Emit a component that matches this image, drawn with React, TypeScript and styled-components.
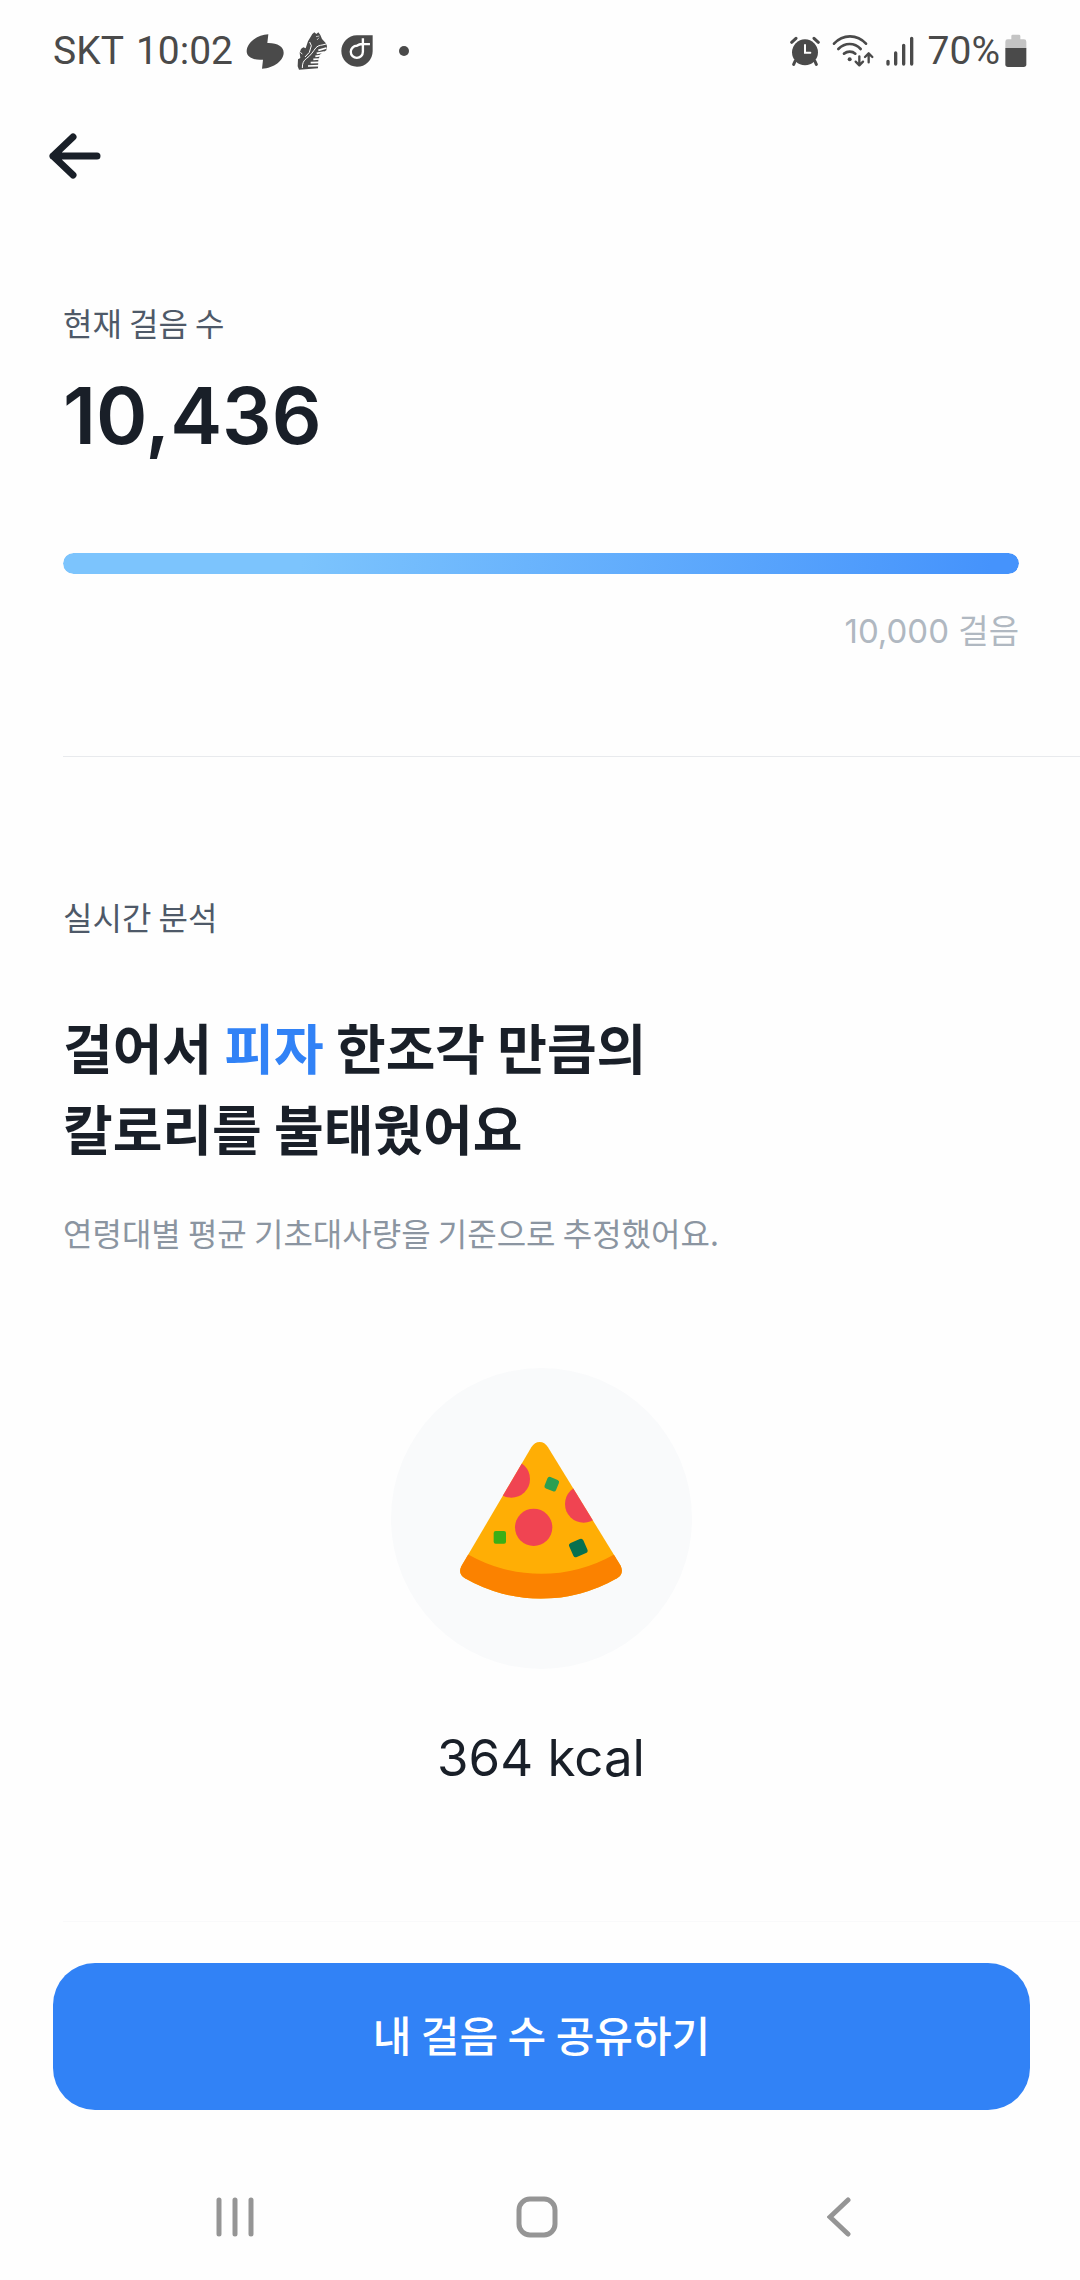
import React from "react";
import styled, { createGlobalStyle } from "styled-components";

const korean = `"Noto Sans CJK KR", sans-serif`;
const latin = `Inter, "Noto Sans CJK KR", sans-serif`;

const GlobalStyle = createGlobalStyle`
  * { box-sizing: border-box; }
  body {
    margin: 0;
    background: #fefefe;
    color: #191f28;
    font-family: ${korean};
  }
  h1, h2, p { margin: 0; }
  svg { display: block; flex: none; }
`;

const Screen = styled.div`
  display: flex;
  flex-direction: column;
  min-height: 100vh;
`;

const StatusBar = styled.header`
  display: flex;
  justify-content: space-between;
  align-items: center;
  height: 102px;
  padding: 0 53px;
  color: #4a4a4a;
  font: 400 39px/48px Roboto, sans-serif;
`;

const StatusGroup = styled.div<{ $gap: number }>`
  display: flex;
  align-items: center;
  gap: ${({ $gap }) => $gap}px;
`;

const AppBar = styled.nav`
  display: flex;
  align-items: center;
  height: 108px;
  padding: 0 44px;
`;

const IconButton = styled.button`
  display: flex;
  justify-content: center;
  align-items: center;
  min-height: 64px;
  padding: 0 5px;
  border: 0;
  background: none;
  color: inherit;
  cursor: pointer;
`;

const Main = styled.main`
  flex: 1;
`;

const Section = styled.section<{ $top: number; $bottom: number }>`
  display: flex;
  flex-direction: column;
  padding: ${({ $top, $bottom }) => `${$top}px 61px ${$bottom}px 63px`};
`;

const Label = styled.h2`
  color: #4e5968;
  font-size: 32px;
  font-weight: 400;
  line-height: 48px;
`;

const StepCount = styled.p`
  margin-top: 22px;
  font: 600 78px/96px ${latin};
`;

const Track = styled.div`
  height: 21px;
  margin-top: 89px;
  border-radius: 11px;
  background: #f2f4f6;
  overflow: hidden;
`;

const Fill = styled.div`
  height: 100%;
  border-radius: 11px;
  background: linear-gradient(100deg, #7cc4fd 25%, #4593fc 97%);
`;

const Goal = styled.p`
  margin-top: 33px;
  color: #b0b8c1;
  text-align: right;
  font: 400 33px/48px ${latin};
`;

const Divider = styled.hr<{ $color: string }>`
  width: auto;
  height: 1px;
  margin: 0 0 0 63px;
  border: 0;
  background: ${({ $color }) => $color};
`;

const Headline = styled.h1`
  margin-top: 66px;
  font-size: 54px;
  font-weight: 700;
  line-height: 81px;
`;

const Accent = styled.span`
  color: #3182f6;
`;

const Caption = styled.p`
  margin-top: 40px;
  color: #8b95a1;
  font-size: 32px;
  line-height: 48px;
`;

const FoodBadge = styled.div`
  display: flex;
  justify-content: center;
  align-items: center;
  align-self: center;
  width: 301px;
  height: 301px;
  margin-top: 112px;
  padding-top: 4px;
  border-radius: 50%;
  background: #f9fafb;
`;

const Calories = styled.p`
  margin-top: 57px;
  text-align: center;
  font: 400 51px/64px ${latin};
`;

const ActionBar = styled.div`
  padding: 41px 50px 43px 53px;
`;

const ShareButton = styled.button`
  width: 100%;
  padding: 39px 24px 45px;
  border: 0;
  border-radius: 42px;
  background: #3182f6;
  color: #ffffff;
  font: 500 42px/63px ${korean};
  cursor: pointer;
`;

const SystemNav = styled.nav`
  display: grid;
  grid-template-columns: repeat(3, 1fr);
  align-items: center;
  height: 127px;
  padding: 0 90px 0 84px;
  color: #959595;
`;

const BlobIcon = () => (
  <svg width="38" height="35" viewBox="46 41 114 105" fill="currentColor" aria-hidden="true">
    <path d="M113 42C78 44 48 68 48 93C48 110 68 121 97 118L94 145C130 143 159 120 159 97C159 79 140 67 110 68Z" />
  </svg>
);

const ShoeIcon = () => (
  <svg width="31" height="38" viewBox="198 37 93 114" aria-hidden="true">
    <path fill="currentColor" d="M244 43L250 38L256 43L262 38L268 46L273 58L284 70L288 79L286 92L268 103L262 122L261 146L204 150L200 140L201 119L208 115L206 99L210 88L217 83L224 86L231 65Z" />
    <g fill="none" stroke="#fefefe" strokeWidth="3">
      <path d="M214 145C214 131 217 123 227 116C240 107 247 94 255 84C263 75 272 78 285 73" />
      <path d="M236 67L241 78L235 98L222 112M208 98L214 103" />
      <path strokeWidth="2" d="M255 51L265 49M258 61L264 54" />
    </g>
    <g fill="none" stroke="#fefefe" strokeWidth="5">
      <path d="M262 92L286 85M257 101L280 97M253 110L268 108M247 119L266 118M239 129L264 128M231 139L264 138" />
    </g>
  </svg>
);

const DropIcon = () => (
  <svg width="32" height="32" viewBox="338 46 95 95" aria-hidden="true">
    <path fill="currentColor" d="M385 47H432V94A46.500 46.500 0 1 1 385 47Z" />
    <path fill="none" stroke="#fefefe" strokeWidth="7" d="M403 56V96A18 18 0 1 1 385 78Q394 72 402 73H424" />
  </svg>
);

const DotIcon = () => (
  <svg width="34" height="10" viewBox="0 0 34 10" fill="currentColor" aria-hidden="true">
    <circle cx="18" cy="5" r="5" />
  </svg>
);

const AlarmIcon = () => (
  <svg width="30" height="30" viewBox="89 106 90 90" fill="none" strokeLinecap="round" aria-hidden="true">
    <circle cx="134" cy="155" r="39" fill="currentColor" />
    <path stroke="currentColor" strokeWidth="9" d="M94 125L107 113M161 113L174 125M104 182L100 191M164 182L168 191" />
    <path stroke="#fefefe" strokeWidth="6" d="M134 133V156H150" />
  </svg>
);

const WifiIcon = () => (
  <svg width="42" height="34" viewBox="219 101 126 102" fill="none" stroke="currentColor" strokeWidth="8" strokeLinecap="round" strokeLinejoin="round" aria-hidden="true">
    <path d="M225 130Q245 108 273 108Q301 108 321 130M238 146Q253 131 272 131Q291 131 305 146M255 160Q263 154 272 154Q282 154 289 160" />
    <circle cx="272" cy="177" r="6" fill="currentColor" stroke="none" />
    <path strokeWidth="7" d="M301 168V194M290 184L301 195L312 184M329 186V160M318 170L329 159L340 170" />
  </svg>
);

const SignalIcon = () => (
  <svg width="28" height="30" viewBox="373 106 84 90" stroke="currentColor" strokeWidth="10" strokeLinecap="round" aria-hidden="true">
    <path d="M379 182V190M402 157V190M426 134V190M450 113V190" />
  </svg>
);

const BatteryIcon = () => (
  <svg width="22" height="34" viewBox="734 101 66 102" aria-hidden="true">
    <path fill="#c4c4c4" d="M735 144V124Q735 117 742 117H753V107Q753 103 757 103H776Q780 103 780 107V117H791Q798 117 798 124V144Z" />
    <path fill="currentColor" d="M735 143H798V192Q798 200 790 200H743Q735 200 735 192Z" />
  </svg>
);

const ArrowLeftIcon = () => (
  <svg width="52" height="46" viewBox="0 0 52 46" fill="none" stroke="currentColor" strokeWidth="7" strokeLinecap="round" strokeLinejoin="round" aria-hidden="true">
    <path d="M24 4L4 23L24 42M4 23H48" />
  </svg>
);

const PizzaIcon = () => (
  <svg width="162" height="157" viewBox="270 276 486 471" role="img" aria-label="피자">
    <defs>
      <clipPath id="slice">
        <path d="M484 292Q494 276 509 276Q524 276 534 292L752 647Q763 672 741 685A457 457 0 0 1 285 685Q263 672 274 649Z" />
      </clipPath>
    </defs>
    <g clipPath="url(#slice)">
      <rect x="260" y="270" width="506" height="486" fill="#ffae05" />
      <path fill="#fb8200" d="M250 588L296 614A441 441 0 0 0 731 614L780 588V760H250Z" />
      <g fill="#f04452">
        <circle cx="424" cy="387" r="56" />
        <circle cx="491" cy="532" r="56" />
        <circle cx="641" cy="462" r="56" />
      </g>
    </g>
    <rect x="527" y="384" width="37" height="37" rx="7" fill="#2c9f52" transform="rotate(22 545 402)" />
    <rect x="371" y="543" width="37" height="38" rx="6" fill="#3aaf16" />
    <rect x="602" y="571" width="46" height="46" rx="8" fill="#08704f" transform="rotate(-24 625 594)" />
  </svg>
);

const RecentsIcon = () => (
  <svg width="38" height="40" viewBox="0 0 38 40" stroke="currentColor" strokeWidth="5" strokeLinecap="round" aria-hidden="true">
    <path d="M3 3V37M19 3V37M35 3V37" />
  </svg>
);

const HomeIcon = () => (
  <svg width="42" height="42" viewBox="0 0 42 42" fill="none" stroke="currentColor" strokeWidth="5" aria-hidden="true">
    <rect x="3" y="3" width="36" height="36" rx="11" />
  </svg>
);

const BackIcon = () => (
  <svg width="24" height="40" viewBox="0 0 24 40" fill="none" stroke="currentColor" strokeWidth="5" strokeLinecap="round" aria-hidden="true">
    <path d="M21 3L3 20L21 37" />
  </svg>
);

const steps = 10436;
const goal = 10000;

export default function App() {
  const progress = Math.min(100, (steps / goal) * 100);

  return (
    <Screen>
      <GlobalStyle />
      <StatusBar>
        <StatusGroup $gap={13}>
          <StatusGroup $gap={12}>
            <span>SKT</span>
            <span>10:02</span>
          </StatusGroup>
          <BlobIcon />
          <ShoeIcon />
          <DropIcon />
          <DotIcon />
        </StatusGroup>
        <StatusGroup $gap={12}>
          <AlarmIcon />
          <WifiIcon />
          <StatusGroup $gap={14}>
            <SignalIcon />
            <StatusGroup $gap={5}>
              <span>70%</span>
              <BatteryIcon />
            </StatusGroup>
          </StatusGroup>
        </StatusGroup>
      </StatusBar>

      <AppBar>
        <IconButton type="button" aria-label="뒤로">
          <ArrowLeftIcon />
        </IconButton>
      </AppBar>

      <Main>
        <Section $top={88} $bottom={101}>
          <Label>현재 걸음 수</Label>
          <StepCount>{steps.toLocaleString("en-US")}</StepCount>
          <Track role="progressbar" aria-label="걸음 수" aria-valuemin={0} aria-valuemax={goal} aria-valuenow={Math.min(steps, goal)}>
            <Fill style={{ width: `${progress}%` }} />
          </Track>
          <Goal>{goal.toLocaleString("en-US")} 걸음</Goal>
        </Section>

        <Divider $color="#e8eaed" />

        <Section $top={135} $bottom={131}>
          <Label>실시간 분석</Label>
          <Headline>
            걸어서 <Accent>피자</Accent> 한조각 만큼의
            <br />
            칼로리를 불태웠어요
          </Headline>
          <Caption>연령대별 평균 기초대사량을 기준으로 추정했어요.</Caption>
          <FoodBadge>
            <PizzaIcon />
          </FoodBadge>
          <Calories>364 kcal</Calories>
        </Section>

        <Divider $color="#f9f9fa" />
      </Main>

      <ActionBar>
        <ShareButton type="button">내 걸음 수 공유하기</ShareButton>
      </ActionBar>

      <SystemNav>
        <IconButton type="button" aria-label="최근 앱">
          <RecentsIcon />
        </IconButton>
        <IconButton type="button" aria-label="홈">
          <HomeIcon />
        </IconButton>
        <IconButton type="button" aria-label="이전">
          <BackIcon />
        </IconButton>
      </SystemNav>
    </Screen>
  );
}
